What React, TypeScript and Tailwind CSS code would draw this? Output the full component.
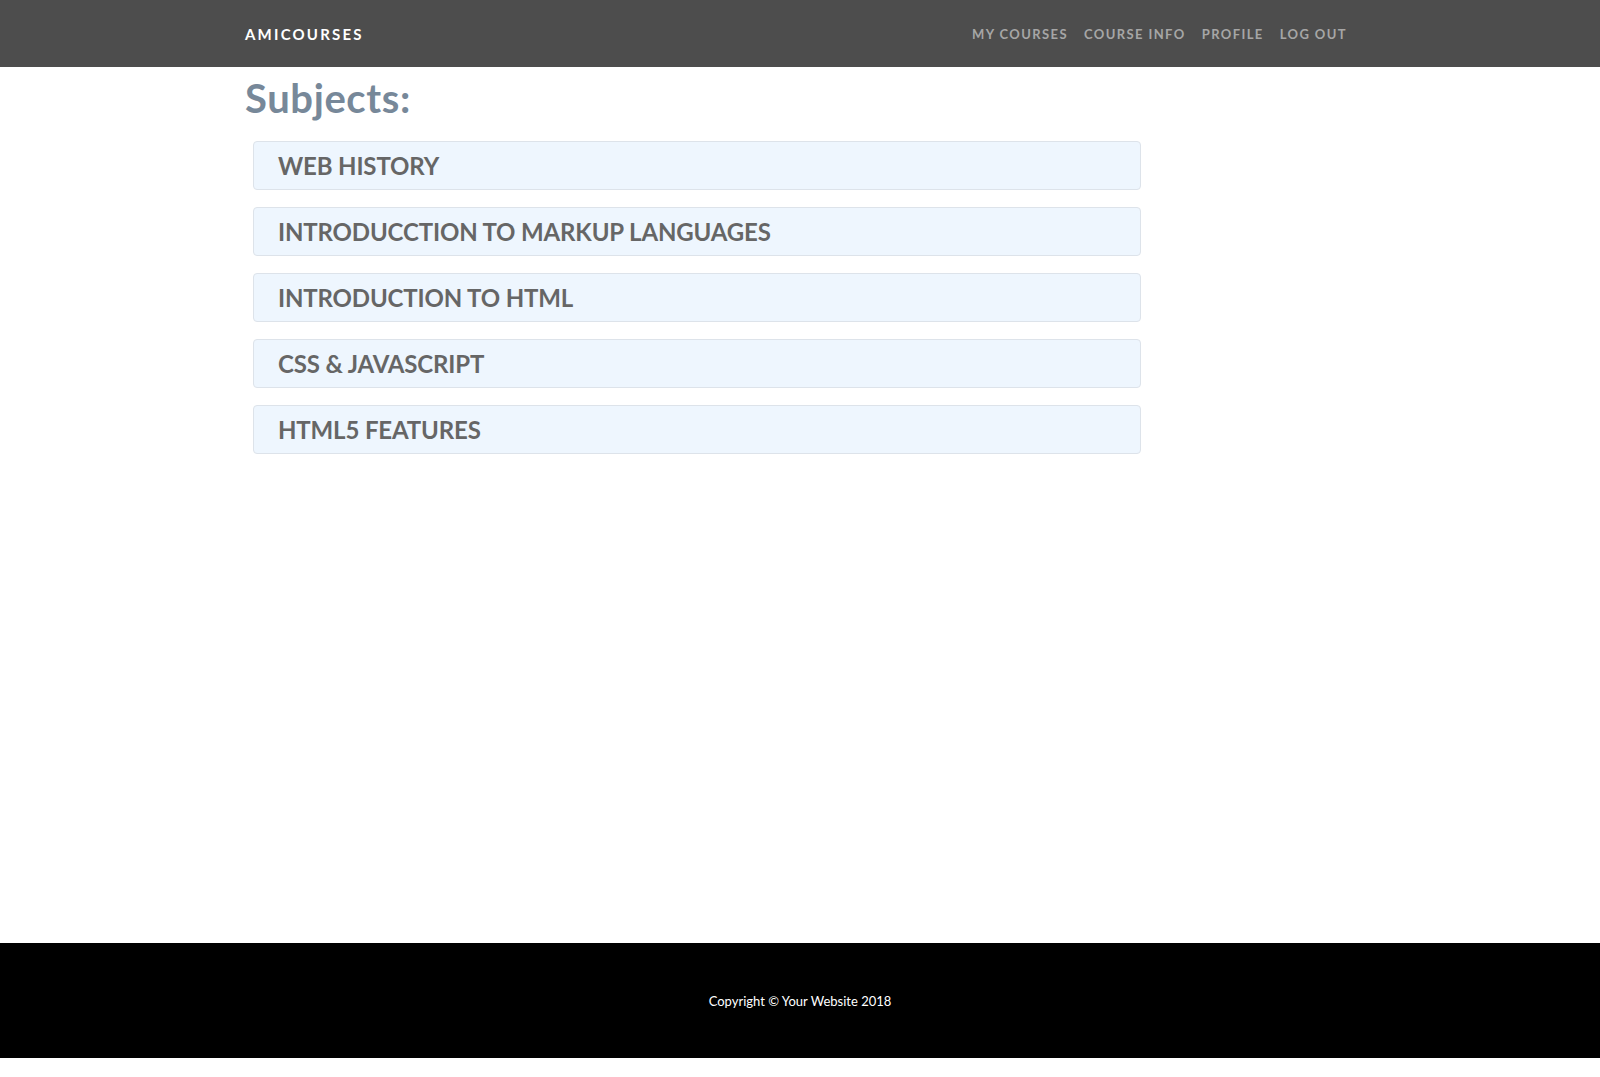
const SUBJECTS = [
  "WEB HISTORY",
  "INTRODUCCTION TO MARKUP LANGUAGES",
  "INTRODUCTION TO HTML",
  "CSS & JAVASCRIPT",
  "HTML5 FEATURES",
];

const LINKS = ["MY COURSES", "COURSE INFO", "PROFILE", "LOG OUT"];

export default function App() {
  return (
    <div className="bg-white font-['Lato','Liberation_Sans',sans-serif]">
      <nav className="h-[67px] bg-[#4d4d4d]">
        <div className="mx-auto flex h-full w-[1110px] items-center justify-between">
          <a className="block text-[15px] leading-[1.2] font-bold tracking-[2.2px] text-white">AMICOURSES</a>
          <ul className="mt-[2px] flex items-center">
            {LINKS.map((l) => (
              <li key={l}>
                <a className="block px-2 text-[13px] leading-[1.2] font-bold tracking-[1.4px] text-[#a6a6a6]">{l}</a>
              </li>
            ))}
          </ul>
        </div>
      </nav>

      <main className="h-[876px]">
        <div className="mx-auto w-[1110px] pt-[7px]">
          <h1 className="text-[40px] leading-[1.2] font-bold tracking-[0.6px] text-[#778899]">Subjects:</h1>
          <div className="mt-[19px] ml-[8px] flex w-[888px] flex-col gap-[17px]">
            {SUBJECTS.map((s) => (
              <div
                key={s}
                className="flex h-[49px] items-center rounded-[4px] border border-[#dde3ea] bg-[#eef6fe] pt-[2px] pl-[24px]"
              >
                <span className="text-[24px] leading-[1.2] font-bold tracking-[-0.15px] text-[#666666]">{s}</span>
              </div>
            ))}
          </div>
        </div>
      </main>

      <footer className="flex h-[115px] items-center justify-center bg-black pt-[2px]">
        <p className="text-[13px] text-white">Copyright © Your Website 2018</p>
      </footer>
    </div>
  );
}
